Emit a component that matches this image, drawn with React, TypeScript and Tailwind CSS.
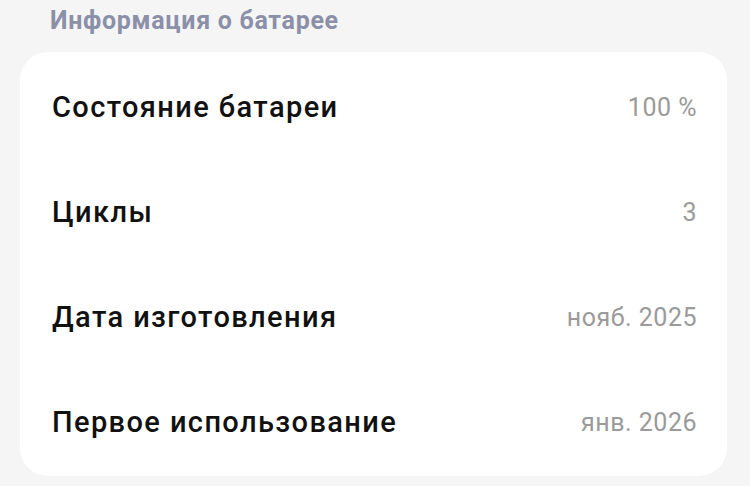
export default function App() {
  const rows = [
    { label: 'Состояние батареи', value: '100 %' },
    { label: 'Циклы', value: '3' },
    { label: 'Дата изготовления', value: 'нояб. 2025' },
    { label: 'Первое использование', value: 'янв. 2026' },
  ];

  return (
    <div className="w-[750px] h-[486px] bg-[#f5f5f5] font-['Roboto',sans-serif] overflow-hidden">
      <h2 className="pl-[50px] pt-[3px] h-[52px] text-[25px] leading-[36px] font-bold tracking-[0.7px] text-[#8b90a8]">
        Информация о батарее
      </h2>
      <div className="mx-[20px] w-[707px] bg-white rounded-[28px] pt-[3px] pb-[1px]">
        {rows.map((r) => (
          <div key={r.label} className="h-[105px] flex items-center justify-between pl-[32px] pr-[30px]">
            <span className="text-[29px] font-medium tracking-[1.4px] text-[#111111]">{r.label}</span>
            <span className="text-[25px] tracking-[0.5px] text-[#9a9a9a]">{r.value}</span>
          </div>
        ))}
      </div>
    </div>
  );
}
